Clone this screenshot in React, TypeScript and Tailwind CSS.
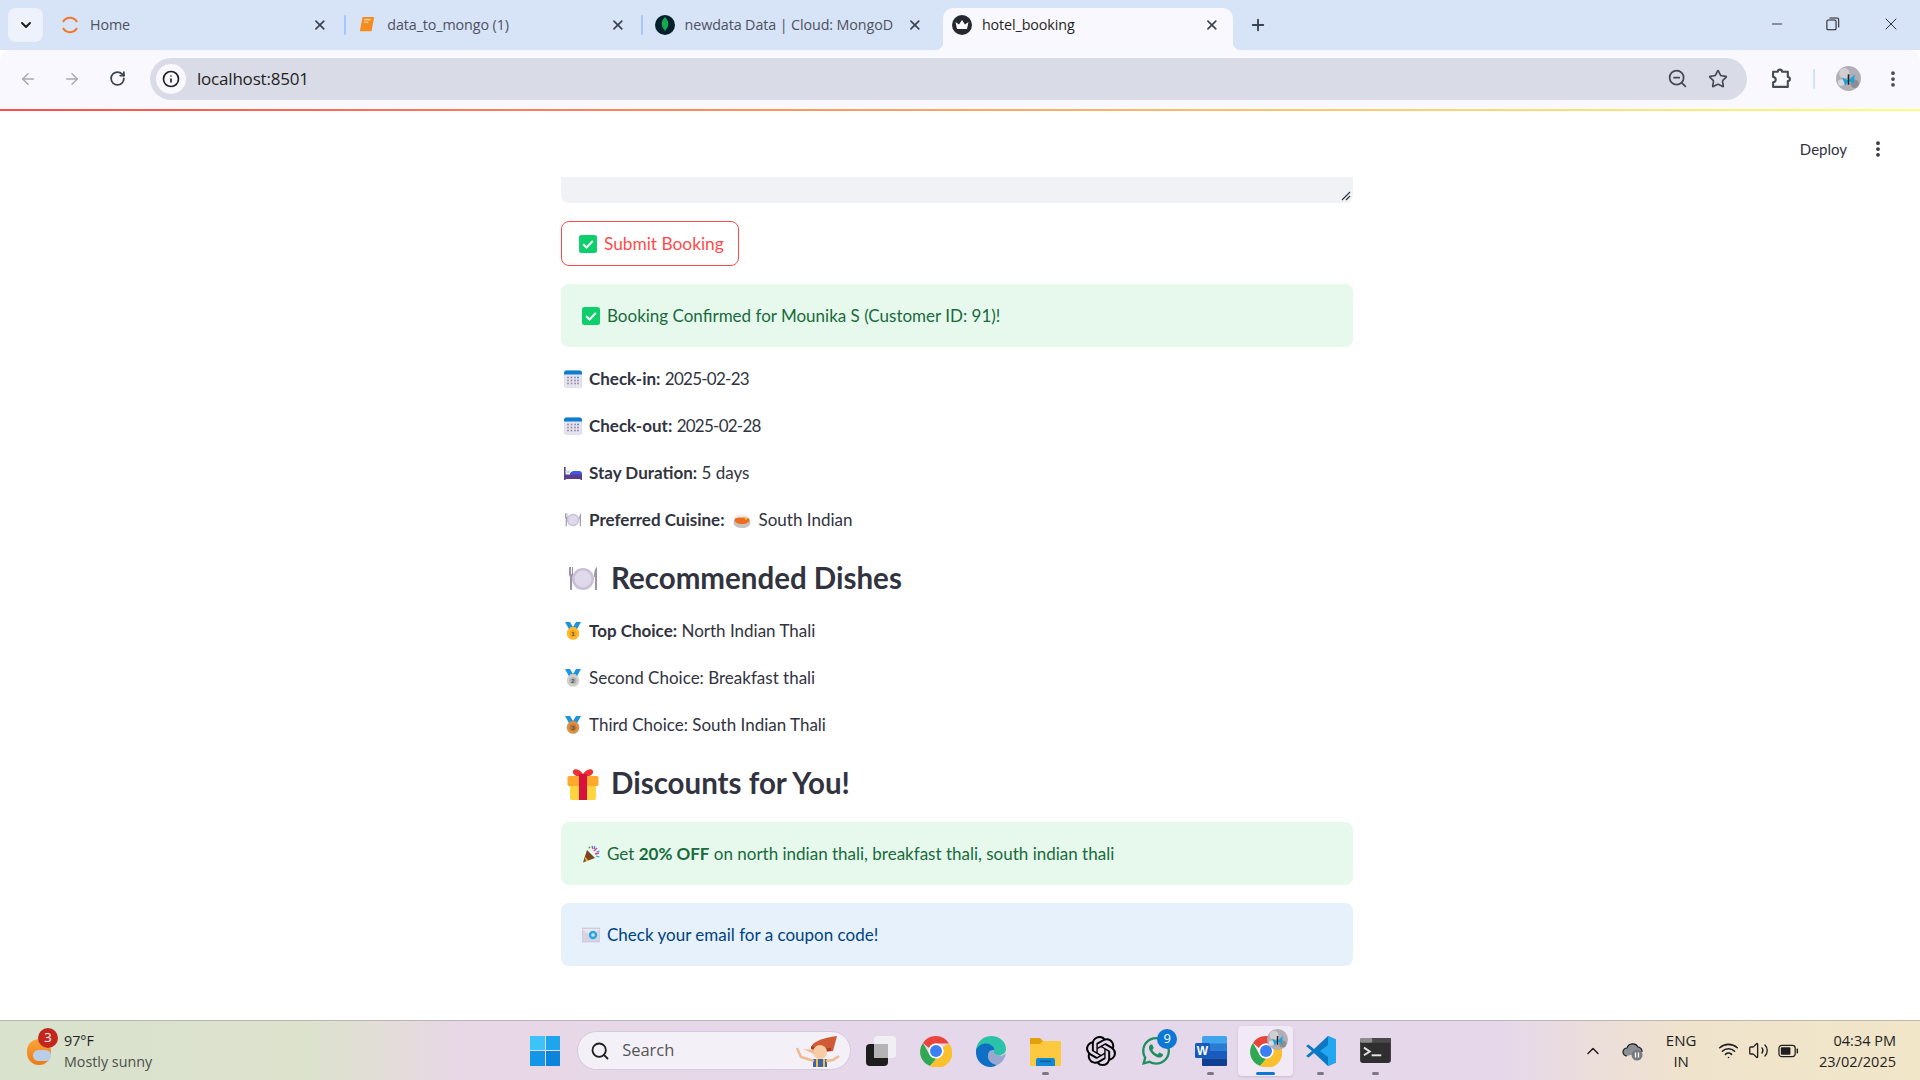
import type { ReactNode } from "react";
import {
  ArrowLeft,
  ArrowRight,
  ChevronDown,
  ChevronUp,
  EllipsisVertical,
  Info,
  Minus,
  Plus,
  RotateCw,
  Search,
  Star,
  Volume2,
  Wifi,
  X,
  ZoomOut,
} from "lucide-react";
import { FaWhatsapp } from "react-icons/fa";
import { SiOpenai } from "react-icons/si";

const CheckBox = () => (
  <svg viewBox="0 0 18 18" className="w-[18px] h-[18px] shrink-0">
    <rect width="18" height="18" rx="2.5" fill="#0fce6c" />
    <path d="M4.2 9.3l3.4 3.2 6.2-6.6" fill="none" stroke="#fff" strokeWidth="2" />
  </svg>
);

const CalendarIcon = () => (
  <svg viewBox="0 0 18 18" className="w-[18px] h-[18px] shrink-0">
    <rect y="0.5" width="18" height="17" rx="2.5" fill="#e6e2ee" stroke="#cfcbdc" strokeWidth="0.5" />
    <path d="M0 4.5V3a2.5 2.5 0 0 1 2.5-2.5h13A2.5 2.5 0 0 1 18 3v1.5z" fill="#0a7fd0" />
    {[4, 7.5, 11, 14].map((x) =>
      [7.5, 10.5, 13.5].map((y) => (
        <rect key={`${x}-${y}`} x={x - 0.8} y={y - 0.8} width="1.6" height="1.6" fill={x === 14 && y === 7.5 ? "#1b8fe0" : "#8a87a5"} />
      )),
    )}
  </svg>
);

const BedIcon = () => (
  <svg viewBox="0 0 18 18" className="w-[18px] h-[18px] shrink-0">
    <rect x="0" y="3" width="1.6" height="13" fill="#5a3e8c" />
    <rect x="1.5" y="6.5" width="4.5" height="2.5" rx="1" fill="#c5d8f5" />
    <path d="M6 9l3-2h6a3 3 0 0 1 3 3v2H6z" fill="#3f57e8" />
    <rect x="1" y="10.5" width="17" height="4.5" fill="#5a3e8c" />
    <rect x="16.4" y="14" width="1.6" height="2" fill="#5a3e8c" />
  </svg>
);

const PlateIcon = ({ cls }: { cls: string }) => (
  <svg viewBox="0 0 32 32" className={cls}>
    <circle cx="16" cy="16" r="11" fill="#c9c0d6" />
    <circle cx="16" cy="16" r="8.5" fill="#e0d9ea" />
    <path d="M2 4v8l1 2v13h2V14l1-2V4H5v7H4V4zM30 4c-2 1-3 5-3 10h1v13h2z" fill="#9a94a8" />
  </svg>
);

const ThaliIcon = () => (
  <svg viewBox="0 0 18 18" className="w-[18px] h-[18px] shrink-0">
    <ellipse cx="9" cy="11.5" rx="8.5" ry="5.5" fill="#c5c2c0" />
    <ellipse cx="9" cy="7.5" rx="7.5" ry="4" fill="#eceaea" />
    <path d="M1.5 9c0-2 3-2.5 7.5-2.5s7.5.5 7.5 2.5-3 4-7.5 4-7.5-2-7.5-4z" fill="#ef6c1f" />
    <circle cx="13" cy="7.5" r="1.2" fill="#f6c243" />
  </svg>
);

const MedalIcon = ({ fill, ring, n }: { fill: string; ring: string; n: string }) => (
  <svg viewBox="0 0 18 18" className="w-[18px] h-[18px] shrink-0">
    <path d="M1 0h5l3 5 3-5h5L12 9H6z" fill="#1d95dc" />
    <path d="M6 5h6v4H6z" fill={ring} />
    <circle cx="9" cy="11.5" r="6.3" fill={fill} />
    <circle cx="9" cy="11.5" r="3.6" fill={ring} />
    <text x="9" y="13.6" textAnchor="middle" fontSize="6" fontWeight="700" fill="#55504a" fontFamily="Liberation Sans, sans-serif">
      {n}
    </text>
  </svg>
);

const GiftIcon = () => (
  <svg viewBox="0 0 32 32" className="w-[32px] h-[32px] shrink-0">
    <path d="M16 6C13 1 7 0 6 3s3 6 10 6c7 0 11-3 10-6s-7-2-10 3z" fill="#ee3131" />
    <rect x="3" y="17" width="26" height="15" rx="2" fill="#ffd43f" />
    <rect x="0.5" y="8" width="31" height="10" rx="1.5" fill="#ffa92c" />
    <rect x="12" y="6" width="8" height="26" fill="#d6113f" />
  </svg>
);

const PartyIcon = () => (
  <svg viewBox="0 0 18 18" className="w-[18px] h-[18px] shrink-0">
    <path d="M5 5l8 8-12 4.5z" fill="#7a4520" />
    <path d="M2.6 11.5l4 4-2.7 1z" fill="#f1b53a" />
    <path d="M10 1l1 3M15 3l-3 3M17 8l-4 1" stroke="#ee2f98" strokeWidth="1.3" />
    <path d="M12.5 1v3M17.5 6l-3 1M14 11l3.5 1" stroke="#1aa7e8" strokeWidth="1.3" />
    <circle cx="7.5" cy="2.5" r="1" fill="#35b678" />
  </svg>
);

const EnvelopeIcon = () => (
  <svg viewBox="0 0 18 18" className="w-[18px] h-[18px] shrink-0">
    <rect y="2" width="18" height="14" rx="1" fill="#d8d3e3" stroke="#b9b4c8" strokeWidth="0.5" />
    <path d="M0 3l9 7 9-7" fill="#ebe7f1" />
    <circle cx="11" cy="9" r="4.2" fill="#2ba6e2" />
    <circle cx="11" cy="9" r="1.8" fill="#bfe6fa" />
  </svg>
);

const ChromeLogo = ({ cls }: { cls: string }) => (
  <svg viewBox="0 0 32 32" className={cls}>
    <path d="M16 1a15 15 0 0 1 13 7.5H16A7.5 7.5 0 0 0 9 13L3 8A15 15 0 0 1 16 1z" fill="#e8453c" />
    <path d="M3 8l6.5 11.5a7.5 7.5 0 0 0 7 4L10 31A15 15 0 0 1 3 8z" fill="#2fa851" />
    <path d="M29 8.5a15 15 0 0 1-19 22.5l6.5-7.5A7.5 7.5 0 0 0 22.5 12z" fill="#fbc02d" />
    <circle cx="16" cy="16" r="7.5" fill="#fff" />
    <circle cx="16" cy="16" r="6" fill="#3b7ff0" />
  </svg>
);

const EdgeLogo = () => (
  <svg viewBox="0 0 32 32" className="w-[32px] h-[32px]">
    <path d="M1 15C2 6 9 1 16 1c9 0 15 6 15 13 0 5-5 7-9 6-3-1-4-3-3-5-2-3-8-4-12-1-4 2-6 5-6 1z" fill="#2bc3a8" />
    <path d="M1 15c3-6 10-8 15-5 3 2 4 4 3 5-4 0-6 2-6 6 0 5 4 8 9 9-2 1-4 2-6 2C7 32 0 25 1 15z" fill="#0f6fc4" />
    <path d="M13 21c0-4 2-6 6-6-1 2 0 4 3 5 3 1 7 1 9-2-1 6-5 11-9 12-5-1-9-4-9-9z" fill="#0c4f9e" opacity="0.35" />
  </svg>
);

const ExplorerLogo = () => (
  <svg viewBox="0 0 32 32" className="w-[32px] h-[32px]">
    <path d="M0 4a1 1 0 0 1 1-1h9l3 3h-13z" fill="#e2a009" />
    <path d="M0 6h31v25H0z" fill="#fdc93f" />
    <path d="M0 6h13l-3 3H0z" fill="#e2a009" />
    <path d="M6 25a2 2 0 0 1 2-2h15a2 2 0 0 1 2 2v6H6z" fill="#0f88d8" />
    <rect x="10" y="25.5" width="11" height="1.6" fill="#0b5d9b" />
  </svg>
);

const WordLogo = () => (
  <svg viewBox="0 0 32 32" className="w-[32px] h-[32px]">
    <rect x="7" y="1" width="25" height="30" rx="1.5" fill="#41a5ee" />
    <rect x="7" y="8.5" width="25" height="7.5" fill="#2b7cd3" />
    <rect x="7" y="16" width="25" height="7.5" fill="#185abd" />
    <path d="M7 23.5h25V29.5a1.5 1.5 0 0 1-1.5 1.5h-22A1.5 1.5 0 0 1 7 29.5z" fill="#103f91" />
    <rect y="8" width="15" height="15" rx="1.5" fill="#185abd" />
    <text x="7.5" y="20" textAnchor="middle" fontSize="12" fontWeight="700" fill="#fff" fontFamily="Liberation Sans, sans-serif">
      W
    </text>
  </svg>
);

const VsCodeLogo = () => (
  <svg viewBox="0 0 32 32" className="w-[32px] h-[32px]">
    <path d="M23 1l8 3.5v23L23 31 9 18l-5.5 4.5L1 21l6-5-6-5 2.5-1.5L9 14z" fill="#0b78c5" />
    <path d="M23 1l8 3.5v23L23 31V22l-8-6 8-6z" fill="#22a7f0" />
  </svg>
);

const TerminalLogo = () => (
  <svg viewBox="0 0 32 26" className="w-[31px] h-[25px]">
    <rect width="32" height="26" rx="2.5" fill="#2f2f2f" />
    <rect width="13" height="5" rx="1.5" fill="#8d8d8d" />
    <rect x="13" width="19" height="5" fill="#4a4a4a" />
    <path d="M4 10l6 4-6 4" fill="none" stroke="#e4e4e4" strokeWidth="2" />
    <rect x="12" y="17" width="10" height="2" fill="#e4e4e4" />
  </svg>
);

const Avatar = ({ cls }: { cls: string }) => (
  <svg viewBox="0 0 24 24" className={cls}>
    <circle cx="12" cy="12" r="12" fill="#b1aeb5" />
    <circle cx="8" cy="7" r="5" fill="#d0ced3" />
    <circle cx="18" cy="17" r="4" fill="#8f8d93" />
    <circle cx="5" cy="16" r="3" fill="#d9d8db" />
    <path d="M6 11l6 3-3 5zM18 8l-6 6 5 3z" fill="#17a4dc" />
    <path d="M12 8v10" stroke="#222" strokeWidth="1.5" />
  </svg>
);

const Mascot = () => (
  <svg viewBox="0 0 46 32" className="w-[46px] h-[32px]">
    <path d="M18 10C22 6 28 3 43 1l-4 15c-6 1-14 0-21-2z" fill="#cf5a33" />
    <path d="M17 11c5 2 12 3 20 2v3c-8 1-15 0-20-2z" fill="#a53d22" />
    <circle cx="26" cy="17" r="7" fill="#f6cba6" />
    <path d="M20 15L9 14l11 5z" fill="#f2b88f" />
    <path d="M19 24h14v8H19z" fill="#3e63ad" />
    <path d="M22 24h2v8h-2zM29 24h2v8h-2z" fill="#f0c13d" />
    <path d="M20 26L7 22 3 13M32 26l7-1 6-4" fill="none" stroke="#f2b88f" strokeWidth="2.5" />
  </svg>
);

const Tab = ({ icon, title, muted }: { icon: ReactNode; title: string; muted?: boolean }) => (
  <div className="w-[290px] h-[42px] flex items-center pl-[9px] pr-[13px] pb-[8px]">
    <span className="w-[20px] h-[20px] flex items-center justify-center shrink-0">{icon}</span>
    <span className={`ml-[10px] w-[226px] overflow-hidden whitespace-nowrap text-[14.3px] font-['Open_Sans',sans-serif] tracking-[-0.1px] ${muted ? "text-[#4d5261]" : "text-[#1f1f1f]"}`}>
      {title}
    </span>
    <X className="ml-auto w-[16px] h-[16px] text-[#3c4350]" strokeWidth={2.5} />
  </div>
);

const TabSep = ({ on }: { on?: boolean }) => (
  <div className="w-[7.3px] h-[42px] flex items-center justify-center pb-[8px]">
    {on && <span className="w-[2px] h-[20px] bg-[#a9c7f5] rounded-full" />}
  </div>
);

const Row = ({ icon, children }: { icon: ReactNode; children: ReactNode }) => (
  <div className="h-[47px] flex items-center gap-[7px] pl-[3px] text-[17px] text-[#31333f]">
    {icon}
    <div className="whitespace-nowrap">{children}</div>
  </div>
);

const Heading = ({ icon, children }: { icon: ReactNode; children: ReactNode }) => (
  <div className="h-[57px] mt-[7px] flex items-center gap-[12px] pl-[6px] text-[29.5px] font-bold text-[#31333f]">
    {icon}
    <div>{children}</div>
  </div>
);

const Alert = ({ icon, tone, mt, children }: { icon: ReactNode; tone: string; mt: string; children: ReactNode }) => (
  <div className={`h-[63px] rounded-lg flex items-center gap-[7px] pl-[21px] text-[17px] ${tone} ${mt}`}>
    {icon}
    <div>{children}</div>
  </div>
);

const Dock = ({ children, pip, active }: { children: ReactNode; pip?: boolean; active?: boolean }) => (
  <div className={`relative w-[55px] h-[50px] flex items-center justify-center rounded ${active ? "bg-[#f1e9f5] shadow-sm" : ""}`}>
    {children}
    {pip && <span className="absolute bottom-[1px] left-[24px] w-[7px] h-[3px] rounded-full bg-[#7d7784]" />}
    {active && <span className="absolute bottom-[1px] left-[18px] w-[19px] h-[3px] rounded-full bg-[#0a78d4]" />}
  </div>
);

export default function App() {
  return (
    <div className="w-[1920px] h-[1080px] flex flex-col overflow-hidden bg-white font-['Lato',sans-serif]">
      {/* Chrome tab strip */}
      <div className="h-[50px] bg-[#d7e3f6] flex items-end shrink-0">
        <div className="ml-[8px] mb-[8px] w-[35px] h-[34px] rounded-lg bg-[#eef2fc] flex items-center justify-center">
          <ChevronDown className="w-[16px] h-[16px] text-[#1f1f1f]" strokeWidth={3} />
        </div>
        <div className="ml-[8px] flex items-end">
          <Tab
            muted
            title="Home"
            icon={
              <svg viewBox="0 0 20 20" className="w-[20px] h-[20px]">
                <path d="M3 7a8 8 0 0 1 14 0M3 13a8 8 0 0 0 14 0" fill="none" stroke="#f37726" strokeWidth="2" />
              </svg>
            }
          />
          <TabSep on />
          <Tab
            muted
            title="data_to_mongo (1)"
            icon={
              <svg viewBox="0 0 20 20" className="w-[18px] h-[18px]">
                <path d="M5 1h13l-3 16H2z" fill="#f78c1e" />
                <path d="M7 4h7M6.5 7h5" stroke="#ffe0b8" strokeWidth="1.2" />
              </svg>
            }
          />
          <TabSep on />
          <Tab
            muted
            title="newdata Data | Cloud: MongoD"
            icon={
              <svg viewBox="0 0 20 20" className="w-[20px] h-[20px]">
                <circle cx="10" cy="10" r="10" fill="#03212c" />
                <path d="M10 2c3 3 4 6 3 9-.5 2-2 3-3 5-1-2-2.5-3-3-5-1-3 0-6 3-9z" fill="#13aa52" />
              </svg>
            }
          />
          <TabSep />
          <div className="relative rounded-t-[10px] bg-[#f9f8fe]">
            <span className="absolute bottom-0 -left-[8px] w-[8px] h-[8px] bg-[radial-gradient(circle_at_0_0,transparent_8px,#f9f8fe_8.5px)]" />
            <span className="absolute bottom-0 -right-[8px] w-[8px] h-[8px] bg-[radial-gradient(circle_at_100%_0,transparent_8px,#f9f8fe_8.5px)]" />
            <Tab
              title="hotel_booking"
              icon={
                <svg viewBox="0 0 20 20" className="w-[20px] h-[20px]">
                  <circle cx="10" cy="10" r="10" fill="#262730" />
                  <path d="M3.5 7l3.5 2.5L10 5l3 4.5L16.5 7 15 14H5z" fill="#fff" />
                </svg>
              }
            />
          </div>
        </div>
        <Plus className="ml-[16px] mb-[16px] w-[18px] h-[18px] text-[#3c4350]" strokeWidth={2.5} />
        <div className="ml-auto mb-[16px] flex items-center text-[#1f1f1f]">
          <Minus className="w-[16px] h-[16px]" strokeWidth={1.3} />
          <svg viewBox="0 0 16 16" className="ml-[41px] w-[14px] h-[14px]" fill="none" stroke="#1f1f1f" strokeWidth="1.2">
            <rect x="1" y="3.5" width="10.5" height="11" rx="1.5" />
            <path d="M4 1.2h8.5a2 2 0 0 1 2 2V12" />
          </svg>
          <X className="ml-[41px] mr-[19px] w-[20px] h-[20px]" strokeWidth={1.1} />
        </div>
      </div>

      {/* Chrome toolbar */}
      <div className="h-[58px] bg-[#f9f8fe] rounded-t-[10px] flex items-center shrink-0 pb-[1px]">
        <ArrowLeft className="ml-[19px] w-[18px] h-[18px] text-[#a8a9b0]" />
        <ArrowRight className="ml-[26px] w-[18px] h-[18px] text-[#a8a9b0]" />
        <RotateCw className="ml-[28px] w-[17px] h-[17px] text-[#3c4350]" strokeWidth={2.5} />
        <div className="ml-[24px] w-[1597px] h-[42px] rounded-full bg-[#d9dce7] flex items-center pl-[6px] pr-[19px]">
          <span className="w-[30px] h-[30px] rounded-full bg-[#f9f8fe] flex items-center justify-center">
            <Info className="w-[18px] h-[18px] text-[#1f1f1f]" strokeWidth={2.2} />
          </span>
          <span className="ml-[11px] text-[17px] text-[#1f1f1f] font-['Open_Sans',sans-serif] tracking-[-0.2px]">localhost:8501</span>
          <ZoomOut className="ml-auto w-[21px] h-[21px] text-[#474a52]" strokeWidth={2} />
          <Star className="ml-[20px] w-[20px] h-[20px] text-[#474a52]" strokeWidth={2} />
        </div>
        <svg viewBox="0 0 20 20" className="ml-[24px] w-[21px] h-[21px]" fill="none" stroke="#474a52" strokeWidth="2">
          <path d="M2 3.5h4.5a2 2 0 0 1 4 0H16v5a2 2 0 0 1 0 4V18H2v-4.5a2.5 2.5 0 0 0 0-5z" strokeLinejoin="round" />
        </svg>
        <span className="ml-[21px] w-[2px] h-[20px] rounded-full bg-[#d5e1f7]" />
        <Avatar cls="ml-[21px] w-[25px] h-[25px]" />
        <EllipsisVertical className="ml-[22px] w-[20px] h-[20px] text-[#474a52]" strokeWidth={2.5} />
      </div>

      <div className="h-[2px] mt-[1px] bg-[linear-gradient(90deg,#ff4b4b,#fffd80)] shrink-0" />

      {/* Streamlit page */}
      <div className="relative flex-1 text-[#31333f] font-['Lato',sans-serif]">
        <div className="absolute top-[27px] right-[32px] flex items-center gap-[21px]">
          <span className="text-[15px]">Deploy</span>
          <EllipsisVertical className="w-[20px] h-[20px]" strokeWidth={2.5} />
        </div>

        <div className="w-[792px] ml-[561px]">
          <div className="relative mt-[66px] h-[26px] bg-[#f0f2f6] rounded-b-lg">
            <svg viewBox="0 0 10 10" className="absolute right-[2px] bottom-[2px] w-[10px] h-[10px]" stroke="#31333f" strokeWidth="1.1">
              <path d="M1 9l8-8M5 9l4-4" />
            </svg>
          </div>

          <div className="mt-[18px] w-[178px] h-[45px] rounded-lg border border-[#ff4b4b] flex items-center pl-[17px] gap-[7px] text-[17.3px] text-[#ff4b4b]">
            <CheckBox />
            <span>Submit Booking</span>
          </div>

          <Alert mt="mt-[18px]" tone="bg-[#e7f8ed] text-[#176b3c]" icon={<CheckBox />}>
            Booking Confirmed for Mounika S (Customer ID: 91)!
          </Alert>

          <div className="mt-[8px]">
            <Row icon={<CalendarIcon />}>
              <b className="font-bold">Check-in:</b> <span className="tracking-[-0.75px]">2025-02-23</span>
            </Row>
            <Row icon={<CalendarIcon />}>
              <b className="font-bold">Check-out:</b> <span className="tracking-[-0.75px]">2025-02-28</span>
            </Row>
            <Row icon={<BedIcon />}>
              <b className="font-bold">Stay Duration:</b> 5 days
            </Row>
            <Row icon={<PlateIcon cls="w-[18px] h-[18px] shrink-0" />}>
              <span className="flex items-center gap-[8px]">
                <b className="font-bold">Preferred Cuisine:</b>
                <ThaliIcon />
                <span>South Indian</span>
              </span>
            </Row>
          </div>

          <Heading icon={<PlateIcon cls="w-[32px] h-[32px] shrink-0" />}>Recommended Dishes</Heading>

          <Row icon={<MedalIcon fill="#fdbb2d" ring="#f5a61c" n="1" />}>
            <b className="font-bold">Top Choice:</b> North Indian Thali
          </Row>
          <Row icon={<MedalIcon fill="#cfcfcf" ring="#b3b3b3" n="2" />}>Second Choice: Breakfast thali</Row>
          <Row icon={<MedalIcon fill="#d9924a" ring="#c47a34" n="3" />}>Third Choice: South Indian Thali</Row>

          <Heading icon={<GiftIcon />}>Discounts for You!</Heading>

          <Alert mt="mt-[10px]" tone="bg-[#e7f8ed] text-[#176b3c]" icon={<PartyIcon />}>
            Get <b className="font-bold">20% OFF</b> on north indian thali, breakfast thali, south indian thali
          </Alert>
          <Alert mt="mt-[18px]" tone="bg-[#e6f1fc] text-[#004280]" icon={<EnvelopeIcon />}>
            Check your email for a coupon code!
          </Alert>
        </div>
      </div>

      {/* Windows taskbar */}
      <div className="h-[60px] shrink-0 border-t border-[#b9b6b4] flex items-center bg-[linear-gradient(90deg,#d8e2cd_0%,#dde2cd_16%,#e8d8e6_24%,#e5d8eb_50%,#e6d8ea_78%,#f0e3cc_88%,#f1e6c8_100%)] font-['Open_Sans',sans-serif] text-[#1f1f1f]">
        <div className="relative ml-[27px] w-[30px] h-[30px]">
          <span className="absolute left-0 top-[3px] w-[24px] h-[26px] rounded-full bg-[linear-gradient(#f9a63a,#f07a14)]" />
          <span className="absolute left-[6px] top-[14px] w-[18px] h-[11px] rounded-full bg-[#b9cfe8]" />
          <span className="absolute left-[11px] -top-[8px] w-[20px] h-[20px] rounded-full bg-[#c4261d] text-white text-[13px] flex items-center justify-center">
            3
          </span>
        </div>
        <div className="ml-[7px] text-[14.3px] leading-[21px]">
          <div>97°F</div>
          <div className="text-[#4c4f4c]">Mostly sunny</div>
        </div>

        <div className="ml-[378px] grid grid-cols-2 gap-[1px] w-[30px] h-[30px]">
          <span className="bg-[#3cc4f8]" />
          <span className="bg-[#1ea5ee]" />
          <span className="bg-[#1396e8]" />
          <span className="bg-[#0c84dc]" />
        </div>

        <div className="ml-[17px] w-[274px] h-[39px] rounded-full bg-[#f4f0f8] border border-[#d4c9dc] flex items-center pl-[12px] pr-[10px]">
          <Search className="w-[20px] h-[20px] text-[#1f1f1f]" strokeWidth={2.2} />
          <span className="ml-[12px] text-[16.5px] text-[#555]">Search</span>
          <span className="ml-auto">
            <Mascot />
          </span>
        </div>

        <div className="ml-[2px] flex items-center">
          <Dock>
            <span className="relative w-[30px] h-[30px]">
              <span className="absolute left-[8px] top-0 w-[22px] h-[22px] rounded-sm bg-[#f1eef4]" />
              <span className="absolute left-0 top-[8px] w-[22px] h-[22px] rounded-sm bg-[#1d1d1d]" />
              <span className="absolute left-[8px] top-[8px] w-[14px] h-[14px] bg-[#b5b3b6]" />
            </span>
          </Dock>
          <Dock>
            <ChromeLogo cls="w-[32px] h-[32px]" />
          </Dock>
          <Dock>
            <EdgeLogo />
          </Dock>
          <Dock pip>
            <ExplorerLogo />
          </Dock>
          <Dock>
            <SiOpenai className="w-[30px] h-[30px] text-black" />
          </Dock>
          <Dock>
            <FaWhatsapp className="w-[32px] h-[32px] text-[#1f8f5f]" />
            <span className="absolute right-[6px] top-[3px] w-[20px] h-[20px] rounded-full bg-[#0a78d4] text-white text-[13px] flex items-center justify-center">
              9
            </span>
          </Dock>
          <Dock pip>
            <WordLogo />
          </Dock>
          <Dock active>
            <ChromeLogo cls="w-[32px] h-[32px]" />
            <Avatar cls="absolute right-[5px] top-[3px] w-[21px] h-[21px]" />
          </Dock>
          <Dock pip>
            <VsCodeLogo />
          </Dock>
          <Dock pip>
            <TerminalLogo />
          </Dock>
        </div>

        <ChevronUp className="ml-[180px] w-[20px] h-[20px]" strokeWidth={1.8} />
        <svg viewBox="0 0 22 20" className="ml-[19px] w-[22px] h-[20px]">
          <path d="M5 15a4 4 0 0 1 0-8 6 6 0 0 1 11-1 4.5 4.5 0 0 1 4 5" fill="#8c8f96" stroke="#1f1f1f" strokeWidth="1.2" />
          <circle cx="15" cy="14" r="5.5" fill="#77797f" />
          <path d="M13.5 11.5v5M16.5 11.5v5" stroke="#fff" strokeWidth="1.3" />
        </svg>
        <div className="ml-[17px] w-[40px] text-center text-[15px] leading-[21px]">
          <div>ENG</div>
          <div>IN</div>
        </div>
        <Wifi className="ml-[17px] w-[21px] h-[21px]" strokeWidth={1.8} />
        <Volume2 className="ml-[9px] w-[21px] h-[21px]" strokeWidth={1.5} />
        <svg viewBox="0 0 22 14" className="ml-[9px] w-[21px] h-[14px]" fill="none">
          <rect x="1" y="1" width="17" height="12" rx="3" stroke="#1f1f1f" strokeWidth="1.3" />
          <rect x="3" y="3" width="10" height="8" rx="1" fill="#1f1f1f" />
          <path d="M19.5 4.5h1.5v5h-1.5z" fill="#1f1f1f" />
        </svg>
        <div className="ml-auto mr-[24px] text-right text-[14.5px] leading-[21px]">
          <div>04:34 PM</div>
          <div>23/02/2025</div>
        </div>
      </div>
    </div>
  );
}
